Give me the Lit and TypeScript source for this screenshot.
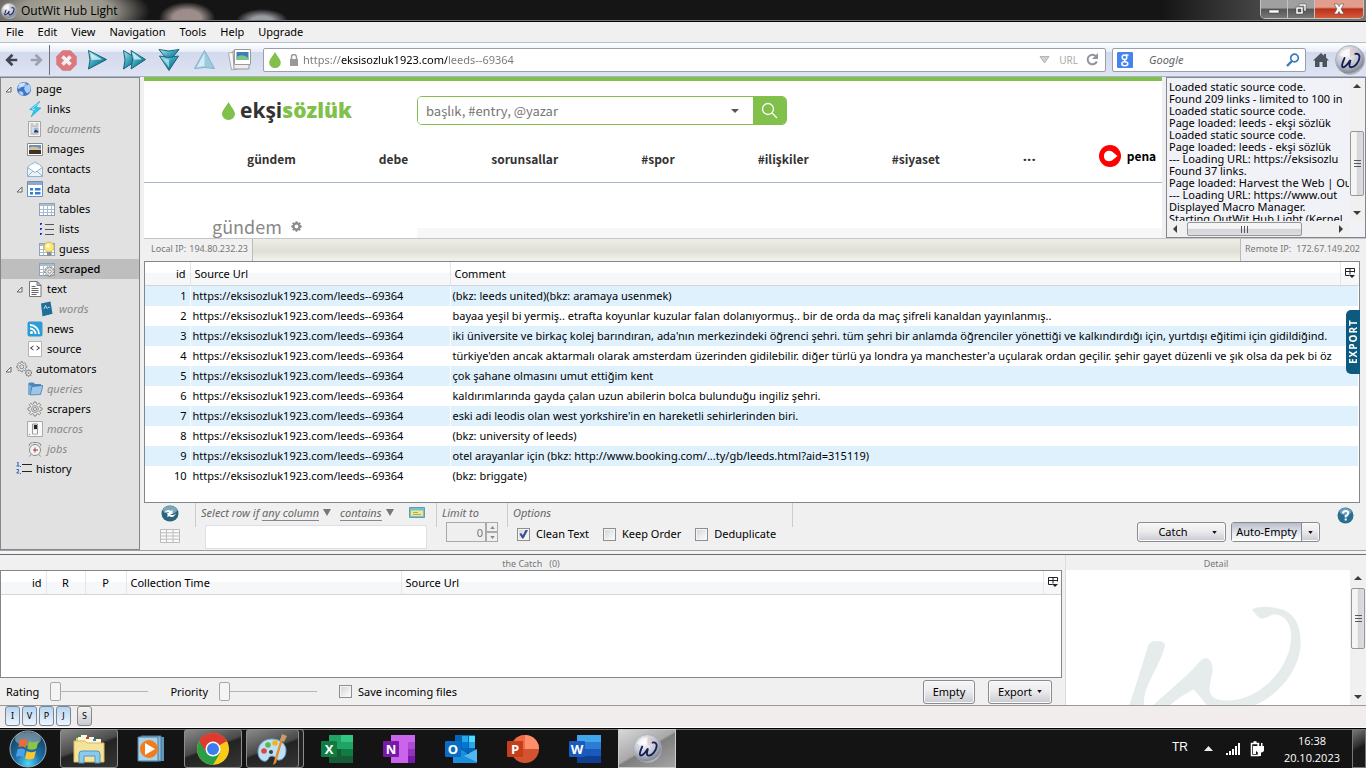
import { LitElement, html, svg, css, nothing, TemplateResult } from "lit";
import { customElement, property } from "lit/decorators.js";
import { classMap } from "lit/directives/class-map.js";

type Node = { name: string; level: number; icon: string; open?: boolean; dim?: boolean; selected?: boolean };

const TREE: Node[] = [
  { name: "page", level: 0, icon: "globe", open: true },
  { name: "links", level: 1, icon: "bolt" },
  { name: "documents", level: 1, icon: "doc", dim: true },
  { name: "images", level: 1, icon: "image" },
  { name: "contacts", level: 1, icon: "mail" },
  { name: "data", level: 1, icon: "data", open: true },
  { name: "tables", level: 2, icon: "grid" },
  { name: "lists", level: 2, icon: "list" },
  { name: "guess", level: 2, icon: "guess" },
  { name: "scraped", level: 2, icon: "scraped", selected: true },
  { name: "text", level: 1, icon: "text", open: true },
  { name: "words", level: 2, icon: "book", dim: true },
  { name: "news", level: 1, icon: "rss" },
  { name: "source", level: 1, icon: "source" },
  { name: "automators", level: 0, icon: "gears", open: true },
  { name: "queries", level: 1, icon: "folder", dim: true },
  { name: "scrapers", level: 1, icon: "gear" },
  { name: "macros", level: 1, icon: "switch", dim: true },
  { name: "jobs", level: 1, icon: "clock", dim: true },
  { name: "history", level: 0, icon: "history" },
];

const URL_TEXT = "https://eksisozluk1923.com/leeds--69364";

const COMMENTS = [
  "(bkz: leeds united)(bkz: aramaya usenmek)",
  "bayaa yeşil bi yermiş.. etrafta koyunlar kuzular falan dolanıyormuş.. bir de orda da maç şifreli kanaldan yayınlanmış..",
  "iki üniversite ve birkaç kolej barındıran, ada'nın merkezindeki öğrenci şehri. tüm şehri bir anlamda öğrenciler yönettiği ve kalkındırdığı için, yurtdışı eğitimi için gidildiğind.",
  "türkiye'den ancak aktarmalı olarak amsterdam üzerinden gidilebilir. diğer türlü ya londra ya manchester'a uçularak ordan geçilir. şehir gayet düzenli ve şık olsa da pek bi öz",
  "çok şahane olmasını umut ettiğim kent",
  "kaldırımlarında gayda çalan uzun abilerin bolca bulunduğu ingiliz şehri.",
  "eski adi leodis olan west yorkshire'in en hareketli sehirlerinden biri.",
  "(bkz: university of leeds)",
  "otel arayanlar için (bkz: http://www.booking.com/...ty/gb/leeds.html?aid=315119)",
  "(bkz: briggate)",
];

const LOG = [
  "Loaded static source code.",
  "Found 209 links - limited to 100 in",
  "Loaded static source code.",
  "Page loaded: leeds - ekşi sözlük",
  "Loaded static source code.",
  "Page loaded: leeds - ekşi sözlük",
  "--- Loading URL: https://eksisozlu",
  "Found 37 links.",
  "Page loaded: Harvest the Web | Ou",
  "--- Loading URL: https://www.out",
  "Displayed Macro Manager.",
  "Starting OutWit Hub Light (Kernel",
];

const gearPath =
  "M7 1h2l.4 1.9 1.2.5L12.300 2.300l1.400 1.400-1.100 1.700.5 1.200L15 7v2l-1.900.4-.5 1.200 1.100 1.700-1.400 1.400-1.700-1.100-1.200.5L9 15H7l-.4-1.900-1.200-.5-1.700 1.100-1.400-1.400 1.100-1.700-.5-1.200L1 9V7l1.900-.4.5-1.200-1.100-1.700 1.400-1.400 1.700 1.100 1.200-.5z";

const tableGrid = svg`<rect x=".5" y="2.500" width="15" height="12" fill="#fff" stroke="#8fa2b6"/><path d="M1 3h14v2H1z" fill="#a9bccf"/><path d="M1 8.500h14M1 11.500h14M4.500 5v9M8.500 5v9M12.500 5v9" stroke="#a9bccf"/>`;

const ICONS: Record<string, TemplateResult> = {
  globe: svg`<circle cx="8" cy="8" r="7" fill="#3f74c4"/><path d="M3 3.500Q6 .8 9.500 1.600L8 4.500 5.500 6 3 8 1.500 7zM10 5l3-2 1.800 4-1.200 4-2.600 1.500L9 10l-1-3zM4 10l3 1 .5 3.500Q4 14 2.500 11.500z" fill="#a8cdf6"/><ellipse cx="7" cy="4" rx="4" ry="2" fill="#fff" opacity=".45"/>`,
  bolt: svg`<path d="M13 0 2.500 8.500l4.500 1L4 16l10-9-5-.800z" fill="#27c4f2" stroke="#1d9fd6" stroke-width=".5"/><path d="M11 2.500 5 8l3.500.8" fill="none" stroke="#9deafd"/>`,
  doc: svg`<path d="M1.500.5h12v15h-12z" fill="#f6f6f6" stroke="#a5a5a5"/><path d="M3.500 3h3M8.500 3h3M3.500 5h8M3.500 7h2M3.500 9h2M3.500 11h2M3.500 13h8" stroke="#999"/><path d="M6.500 6.500h5v5h-5z" fill="#9db9e0"/><path d="m6.500 11.500 2-3 3 2v1z" fill="#233a68"/>`,
  image: svg`<path d="M.5 2.500h15v12H.5z" fill="#fff" stroke="#8a8a8a"/><path d="M2 4h12v9H2z" fill="#6d8fc4"/><path d="M2 8h12v5H2z" fill="#3b3326"/><path d="M2 7q5-3 12 1v1H2z" fill="#d9c08f"/>`,
  mail: svg`<path d="M.5 6 8 .8 15.500 6v9.500H.5z" fill="#eaf5fb" stroke="#93b4c8"/><path d="M3 4h10v5l-5 3-5-3z" fill="#fff"/><path d="m.5 6.500 7.500 5 7.500-5M.5 15.500 6 10M15.500 15.500 10 10" fill="none" stroke="#93b4c8"/>`,
  data: svg`<path d="M.5.500h15v15H.5z" fill="#fff" stroke="#6f8eb5"/><path d="M1 1h14v3H1z" fill="#8ea9cb"/><path d="M3 7h3v2.500H3zM3 11h3v2.500H3zM8 7h5.500v2.500H8zM8 11h5.500v2.500H8z" fill="#2f7de0"/>`,
  grid: tableGrid,
  list: svg`<path d="M6 3.500h9M6 8.500h9M6 13.500h9" stroke="#555"/><path d="M1 2h2v2H1zM1 7h2v2H1zM1 12h2v2H1z" fill="#1a25d0"/><path d="M2 3h1v1H2zM2 8h1v1H2zM2 13h1v1H2z" fill="#3db0e8"/>`,
  guess: svg`${tableGrid}<circle cx="10" cy="6" r="5" fill="#fbe77a" stroke="#d8b23c" stroke-width=".8"/><circle cx="9" cy="5" r="2" fill="#fffbd6"/><path d="M8 11h4v4H8z" fill="#8b9096"/>`,
  scraped: svg`${tableGrid}<g transform="translate(5 5) scale(.7)"><path d=${gearPath} fill="#e2e2e2" stroke="#777"/><circle cx="8" cy="8" r="2.200" fill="#fff" stroke="#777"/></g>`,
  text: svg`<path d="M2.500.5H10L14 4.500v11H2.500z" fill="#fff" stroke="#777"/><path d="M10 .5v4h4z" fill="#ccc" stroke="#777"/><path d="M4.500 5.500h4M4.500 7.500h7M4.500 9.500h7M4.500 11.500h7M4.500 13.500h5" stroke="#666"/>`,
  book: svg`<path d="m2 2.500 9.500-2 2 12.500-10 2.500z" fill="#1f6f99"/><path d="m3.500 15.500 10-2.500.5 1-9.800 2z" fill="#dce8ee"/><path d="m5 8 1.500-3.500L8 7.500M8.500 7.500q1.500-3 2-.5" fill="none" stroke="#cfe6f2" stroke-width=".9"/>`,
  rss: svg`<rect x=".5" y=".5" width="15" height="15" rx="2" fill="#2c9cd8"/><circle cx="4.500" cy="11.500" r="1.500" fill="#fff"/><path d="M3 7.500a5.500 5.500 0 0 1 5.500 5.500M3 4a9 9 0 0 1 9 9" fill="none" stroke="#fff" stroke-width="1.800"/>`,
  source: svg`<path d="M1.500.5h13v15h-13z" fill="#fff" stroke="#b4b4b4"/><path d="m6.500 5-3 2 3 2M9.500 5l3 2-3 2" fill="none" stroke="#333"/>`,
  gears: svg`<g transform="scale(.72)"><path d=${gearPath} fill="#ededed" stroke="#666"/><circle cx="8" cy="8" r="2.800" fill="#e1e1e1" stroke="#666"/></g><g transform="translate(9 8.500) scale(.45)"><path d=${gearPath} fill="#ededed" stroke="#666" stroke-width="1.800"/><circle cx="8" cy="8" r="2" fill="#777"/></g>`,
  folder: svg`<path d="M1 3l1.500-1.500h4L8 3h6v10H1z" fill="#4d86bd"/><path d="M3 14 5 5.500l11-1-2.500 9z" fill="#9cc6ea" stroke="#3d719f" stroke-width=".7"/><path d="M1 3v11h2L4.500 5" fill="#7bb0dd"/>`,
  gear: svg`<path d=${gearPath} fill="#e9e9e9" stroke="#8a8a8a"/><circle cx="8" cy="8" r="3.500" fill="#d6d6d6" stroke="#999"/><circle cx="8" cy="8" r="1.500" fill="#fff" stroke="#8a8a8a"/>`,
  switch: svg`<path d="M.5.500h15v15H.5z" fill="#f7f7f7" stroke="#aaa"/><path d="M5.500 3h5v10h-5z" fill="#ddd" stroke="#999"/><path d="M7 4h3v4H7z" fill="#222"/><path d="M6 9h4v3.500H6z" fill="#fafafa"/><circle cx="2.500" cy="13.500" r=".7" fill="#999"/>`,
  clock: svg`<circle cx="8" cy="9" r="5.500" fill="#f4f4f4" stroke="#8b8b8b"/><path d="M2 5q0-3 3.500-3.500M14 5q0-3-3.500-3.500M6 1.500h4M4 13.500 2.500 15.500M12 13.500l1.500 2" fill="none" stroke="#8b8b8b"/><path d="M8 6.500v5M6 9h5" stroke="#a33b3b"/>`,
  history: svg`<path d="M6 3.500h10M6 10.500h10" stroke="#222"/><path d="M1 2l1-1v4M.5 5h3M.5 8.500h2v1.500L.7 12h2.500" fill="none" stroke="#2a64b4"/><path d="M4 5h1v1H4zM4 12h1v1H4z" fill="#2a64b4"/>`,
};

const icon = (name: string) => html`<svg class="i16" viewBox="0 0 16 16" aria-hidden="true">${ICONS[name]}</svg>`;

const wit = (id: string, cls: string) => html`<svg class=${cls} viewBox="0 0 30 30" aria-hidden="true">
  <defs>
    <radialGradient id=${id} cx=".4" cy=".3" r=".75"><stop offset="0" stop-color="#fff"/><stop offset=".55" stop-color="#bfc2cd"/><stop offset=".85" stop-color="#858a95"/><stop offset="1" stop-color="#e8e8ee"/></radialGradient>
  </defs>
  <circle cx="15" cy="15" r="14.500" fill="url(#${id})" stroke="#a7abb5" stroke-width=".8"/>
  <path d="M4 10Q9 3 17 3.500L9 12z" fill="#fff" opacity=".6"/><path d="M15 3q7 1 9 6l-9 3z" fill="#d9b9c2" opacity=".5"/>
  <path d="M9.500 13C8 17 6 20.500 7.500 22c2.500 1.500 6-4 8-7-1 4-2.200 6.500 0 7.200 4 1 8.500-5 9-9.700.3-3-2-4.300-4.200-3.600" fill="none" stroke="#131f57" stroke-width="1.900" stroke-linecap="round"/>
</svg>`;

const tealDefs = html`<svg class="defs" aria-hidden="true"><defs>
  <linearGradient id="teal" x1="0" y1="0" x2="1" y2="1"><stop offset="0" stop-color="#a8e3ec"/><stop offset=".5" stop-color="#2f9bb3"/><stop offset="1" stop-color="#0e5268"/></linearGradient>
</defs></svg>`;

const drop = (cls: string) => html`<svg class=${cls} viewBox="0 0 13 18" aria-hidden="true"><path d="M6.500 0C8.500 4 13 8.500 13 12a6.500 6 0 0 1-13 0C0 8.500 4.500 4 6.500 0z" fill="#80c04b"/></svg>`;

const OFFICE_ART: Record<string, TemplateResult> = {
  X: svg`<path d="M8 2h12v14H8z" fill="#21a366"/><path d="M20 2h12v7H20z" fill="#33c481"/><path d="M20 9h12v7H20z" fill="#21a366"/><path d="M8 16h12v7H8z" fill="#185c37"/><path d="M20 16h12v7H20z" fill="#107c41"/><path d="M8 23h24v7H8z" fill="#185c37"/>`,
  N: svg`<path d="M8 2h24v28H8z" fill="#ca64ea"/><path d="M25 9h7v7h-7z" fill="#ae4bd5"/><path d="M25 16h7v7h-7z" fill="#9332bf"/><path d="M25 23h7v7h-7z" fill="#7719aa"/>`,
  O: svg`<path d="M10 2h20v18H10z" fill="#0364b8"/><path d="M17 3h6v6h-6z" fill="#28a8ea"/><path d="M24 3h6v6h-6z" fill="#50d9ff"/><path d="M17 9h6v6h-6z" fill="#0078d4"/><path d="M24 9h6v6h-6z" fill="#28a8ea"/><path d="M8 17h9l15 10v3H8z" fill="#1a8fdc"/><path d="M32 16v13L19 23z" fill="#50b8f0"/>`,
  P: svg`<circle cx="18" cy="16" r="14" fill="#d35230"/><path d="M18 2a14 14 0 0 1 14 14H18z" fill="#ff8f6b"/><path d="M18 2v14H4A14 14 0 0 1 18 2z" fill="#ed6c47"/>`,
  W: svg`<path d="M8 2h24v7H8z" fill="#41a5ee"/><path d="M8 9h24v7H8z" fill="#2b7cd3"/><path d="M8 16h24v7H8z" fill="#185abd"/><path d="M8 23h24v7H8z" fill="#103f91"/>`,
};

const office = (letter: string, tile: string) => html`
  <svg class="app" viewBox="0 0 32 32" aria-hidden="true">
    ${OFFICE_ART[letter]}
    <rect y="8" width="16" height="16" rx="1" fill=${tile}/>
    <text x="8" y="20.500" text-anchor="middle" font-family="Open Sans, sans-serif" font-weight="700" font-size="13" fill="#fff">${letter}</text>
  </svg>`;

@customElement("scroll-bar")
export class ScrollBar extends LitElement {
  @property({ type: Boolean, reflect: true }) horizontal = false;

  static styles = css`
    :host { display: flex; flex-direction: column; align-items: stretch; width: 16px; background: #f0f0f0; box-sizing: border-box; }
    :host([horizontal]) { flex-direction: row; width: auto; height: 16px; }
    svg { display: block; width: 16px; height: 16px; flex: none; }
    .before { flex: var(--before, 1); }
    .after { flex: var(--after, 1); }
    .thumb { flex: var(--thumb, 1); display: grid; place-content: center; gap: 2px; border: 1px solid #979797; border-radius: 2px; background: linear-gradient(90deg, #f5f5f5 45%, #d4d4d8 50%, #dedee2); margin: 0 1px; }
    :host([horizontal]) .thumb { background: linear-gradient(#f5f5f5 45%, #d4d4d8 50%, #dedee2); margin: 1px 0; grid-auto-flow: column; }
    .grip { width: 7px; height: 1px; background: #55585f; }
    :host([horizontal]) .grip { width: 1px; height: 7px; }
  `;

  render() {
    const h = this.horizontal;
    return html`
      <svg viewBox="0 0 16 16"><path d=${h ? "M10 4v8L6 8z" : "M4 10h8L8 6z"} fill="#3c3c3c"/></svg>
      <div class="before"></div>
      <div class="thumb"><div class="grip"></div><div class="grip"></div><div class="grip"></div></div>
      <div class="after"></div>
      <svg viewBox="0 0 16 16"><path d=${h ? "M6 4v8l4-4z" : "M4 6h8l-4 4z"} fill="#3c3c3c"/></svg>
    `;
  }
}

@customElement("app-root")
export class AppRoot extends LitElement {
  static styles = css`
    :host { display: flex; flex-direction: column; height: 100vh; overflow: hidden; font: 11px/16px "Noto Sans", "Open Sans", sans-serif; color: #000; background: #f0f0f0; }
    * { box-sizing: border-box; }
    button, input, select { font: inherit; color: inherit; margin: 0; }
    button { padding: 0; border: 0; background: none; }
    svg { display: block; flex: none; }
    .defs { position: absolute; width: 0; height: 0; }
    .i16 { width: 16px; height: 16px; }

    .title { display: flex; align-items: flex-start; height: 22px; flex: none; overflow: hidden; border-bottom: 1px solid #000; box-shadow: inset 0 -1px #77797c;
      background: radial-gradient(ellipse 84px 30px at 66px 11px, #aeaba0, #98958b 55%, #98958b00 100%), radial-gradient(ellipse 28px 16px at 187px 18px, #9c8d8a 50%, #9c8d8a00 100%), radial-gradient(ellipse 26px 12px at 262px 21px, #9a9da3 40%, #9a9da300 100%), linear-gradient(90deg, #55534e, #151515 10%, #151515 85%, #444 92%, #777); }
    .title .brand { display: flex; align-items: center; gap: 4px; height: 21px; padding-left: 1px; flex: 1; font: 12px/16px "Open Sans", sans-serif; }
    .tiny { width: 16px; height: 16px; }
    .wctl { display: flex; height: 19px; margin-right: 2px; border: 1px solid #c3c3c3; border-top: 0; border-radius: 0 0 5px 5px; overflow: hidden; }
    .wctl button { width: 27px; height: 18px; display: grid; place-items: center; background: linear-gradient(#a0a0a0 45%, #555 50%, #777); border-right: 1px solid #c3c3c3; }
    .wctl .x { width: 48px; border: 0; background: linear-gradient(#e39d8c 40%, #b8301a 50%, #d9593a); }
    .wctl svg { width: 14px; height: 12px; }

    .menu { display: flex; align-items: center; gap: 14px; height: 21px; padding-left: 6px; border-bottom: 1px solid #b1bfd4; background: #f0f0f0; flex: none; }

    .tools { display: flex; align-items: center; height: 34px; flex: none; border-bottom: 1px solid #a9b1c4; background: linear-gradient(#fff, #e9edf7 26%, #d2d9ec 28%, #dfe4f3); }
    .tools .nav { width: 24px; height: 30px; display: grid; place-items: center; }
    .tools .act { width: 35px; height: 30px; display: grid; place-items: center; }
    .tools .stop { width: 31px; }
    .nav svg { width: 14px; height: 14px; }
    .act svg { width: 28px; height: 26px; }
    .sep { width: 1px; height: 30px; background: #6d717c; margin: 0 1px; }
    .field { display: flex; align-items: center; height: 24px; border: 1px solid #9ba0a8; border-radius: 2px; background: #fff; color: #999; }
    .field.url { flex: 1; margin: 0 6px; padding: 0 6px 0 5px; }
    .field.find { width: 194px; padding: 0 5px 0 4px; }
    .field input { flex: 1; min-width: 0; border: 0; outline: 0; background: none; }
    .url input { margin-left: 3px; color: transparent; background: linear-gradient(90deg, #777 40px, #000 40px 146px, #777 146px); -webkit-background-clip: text; background-clip: text; }
    .find input { font-style: italic; padding-left: 16px; }
    .find input::placeholder { color: #666; }
    .dropi { width: 12px; height: 16px; margin-right: 9px; }
    .lock { width: 8px; height: 12px; }
    .field small { font-size: 10px; color: #aaa; margin: 0 8px 0 9px; }
    .home { width: 16px; height: 16px; margin: 0 6px 0 7px; }
    .orb { width: 30px; height: 30px; margin-right: 1px; }

    .main { display: flex; flex: 1; min-height: 0; }
    .tree { width: 140px; flex: none; border: 1px solid #82868f; background: #e1e1e1; padding-top: 1px; }
    .tree ul { list-style: none; margin: 0; padding: 0; }
    .tree li { display: flex; align-items: center; height: 20px; padding-left: 4px; }
    .tree .l1 { padding-left: 15px; }
    .tree .l2 { padding-left: 27px; }
    .tree .tw { width: 7px; height: 7px; margin-right: 4px; }
    .tree span { padding-left: 4px; }
    .tree .dim { color: #888; font-style: italic; }
    .tree .sel { background: #bebebe; }
    .tree .sel span { font-weight: 500; }

    .work { flex: 1; min-width: 0; display: flex; flex-direction: column; margin-left: 4px; }
    .top { display: flex; height: 161px; flex: none; }
    .site { flex: 1; min-width: 0; overflow: hidden; background: #fff; border-top: 4px solid #80c04b; font-family: "Noto Sans CJK SC", "Open Sans", sans-serif; color: #333; }
    .shead { display: flex; align-items: center; padding: 15px 0 0 78px; }
    .slogo { display: flex; align-items: center; gap: 5px; width: 195px; font-family: "Open Sans", sans-serif; font-size: 21px; font-weight: 700; line-height: 29px; }
    .slogo b { color: #80c04b; margin-left: -5px; }
    .dropl { width: 13px; height: 18px; }
    .sfind { display: flex; width: 370px; height: 29px; border: 1px solid #80c04b; border-radius: 5px; overflow: hidden; }
    .sfind input { flex: 1; min-width: 0; border: 0; outline: 0; padding: 0 8px; font-size: 13px; }
    .sfind input::placeholder { color: #757575; }
    .sfind .dd { width: 36px; display: grid; place-items: center; }
    .sfind .go { width: 33px; display: grid; place-items: center; background: #80c04b; }
    .snav { display: flex; align-items: center; gap: 83px; height: 58px; padding: 10px 0 0 103px; border-bottom: 1px solid #a9b7c6; font-size: 12px; font-weight: 700; line-height: 20px; white-space: nowrap; }
    .snav a { color: inherit; text-decoration: none; }
    .snav .dots { font: 700 15px/20px "Open Sans", sans-serif; }
    .snav .pena { display: flex; align-items: center; gap: 6px; margin: 0 0 6px -20px; color: #000; }
    .pena svg { width: 22px; height: 22px; }
    .sbody { display: flex; align-items: flex-start; padding: 32px 0 0 68px; }
    .sbody h2 { display: flex; align-items: center; gap: 9px; margin: 0; width: 205px; font-size: 18px; line-height: 22px; font-weight: 400; color: #888; }
    .sbody h2 svg { width: 11px; height: 11px; }
    .sbody .band { flex: 1; height: 20px; margin-top: 13px; background: #f7f7f7; }

    .log { width: 200px; margin-left: 4px; border: 1px solid #82868f; display: grid; grid-template: minmax(0, 1fr) 16px / minmax(0, 1fr) 16px; background: #f0f2f8; }
    .log .lines { overflow: hidden; padding: 3px 0 0 2px; line-height: 12px; white-space: nowrap; }
    .vlog { --before: 38; --thumb: 64; --after: 9; }
    .hlog { --before: 4; --thumb: 115; --after: 32; }

    .ips { display: flex; height: 23px; flex: none; border-top: 1px solid #c6c6c6; font-size: 9px; line-height: 20px; color: #777; }
    .ips div { display: flex; justify-content: space-between; width: 109px; padding: 0 4px 0 7px; border-right: 1px solid #bbb; }
    .ips div:last-child { width: 125px; border: 0; padding: 0 6px 0 4px; }
    .ips i { flex: 1; background: linear-gradient(#eeeee8, #dfdfd6 55%, #f4f4ec); border-right: 1px solid #bbb; }

    .gridwrap { flex: 1; min-height: 0; margin-right: 6px; border: 1px solid #82868f; background: #fff; overflow: hidden; }
    table { width: 100%; border-collapse: collapse; table-layout: fixed; }
    th { height: 23px; padding: 1px 4px 0; font-weight: 400; text-align: left; background: linear-gradient(#fff 45%, #f6f7f9 50%); border-bottom: 1px solid #d5d5d5; border-right: 1px solid #e6e6ea; }
    th:last-child { border-right: 0; padding: 0 0 0 3px; }
    th svg { width: 12px; height: 12px; }
    td { height: 20px; padding: 0 3px 0 2px; overflow: hidden; white-space: nowrap; border-right: 1px solid #fff; line-height: 20px; }
    .gap td { height: 1px; }
    .num { text-align: right; width: 45px; }
    .src { width: 260px; }
    .pick { width: 18px; }
    tr.odd td { background: #dff1fd; }

    .filter { display: flex; height: 47px; flex: none; color: #666; }
    .filter .cell { border-right: 1px solid #ccc; height: 24px; }
    .filter i, .filter select { font-style: italic; }
    .c0 { width: 52px; display: flex; flex-direction: column; align-items: center; gap: 7px; padding-top: 2px; }
    .c0 .big { width: 18px; height: 17px; }
    .c0 .tbl { width: 20px; height: 14px; }
    .c1 { width: 241px; padding: 1px 0 0 5px; }
    .row { display: flex; align-items: center; height: 17px; }
    .row select { appearance: none; border: 0; padding: 0; background: none; border-bottom: 1px solid #888; outline: 0; height: 16px; }
    .row .ar { width: 8px; height: 7px; margin: 0 9px 0 4px; }
    .row .card { width: 16px; height: 11px; margin-left: 6px; }
    .c1 .q { display: block; width: 222px; height: 24px; margin: 4px 0 0 4px; border: 1px solid #dcdfe6; background: #fff; }
    .c2 { width: 71px; padding: 1px 0 0 5px; }
    .spin { display: flex; align-items: flex-end; padding: 1px 0 0 4px; }
    .spin input { width: 40px; height: 20px; border: 1px solid #aaa; background: #efefef; text-align: right; padding: 0 2px 0 0; appearance: textfield; color: #777; }
    .spin input::-webkit-inner-spin-button { display: none; }
    .spin div { display: flex; flex-direction: column; width: 12px; height: 20px; }
    .spin button { flex: 1; border: 1px solid #aaa; display: grid; place-items: center; }
    .spin svg { width: 5px; height: 3px; }
    .c3 { width: 285px; padding: 1px 0 0 5px; }
    .checks { display: flex; gap: 14px; padding: 5px 0 0 4px; color: #000; }
    label.chk { display: flex; align-items: center; gap: 6px; white-space: nowrap; color: #000; }
    label.chk input { appearance: none; width: 13px; height: 13px; flex: none; border: 1px solid #8e8f8f; background: linear-gradient(135deg, #cfd3d9, #fff); box-shadow: inset 0 0 0 1px #f4f4f4; display: grid; }
    label.chk input:checked::before { content: ""; margin: 1px; background: #3a4f91; clip-path: polygon(5% 50%, 25% 40%, 42% 65%, 75% 0, 100% 5%, 50% 100%, 35% 100%); }
    .end { margin-left: auto; display: flex; padding: 0 12px 0 0; }
    .btn { display: flex; align-items: center; justify-content: center; gap: 8px; height: 20px; border: 1px solid #8a8b90; border-radius: 3px; background: linear-gradient(#f6f6f6, #ececee 45%, #c9cad2); box-shadow: inset 0 0 0 1px #fafafa; color: #000; }
    .btn svg { width: 5px; height: 3px; }
    .end .btn { margin-top: 19px; width: 89px; }
    .end .catch { gap: 24px; padding-left: 12px; margin-right: 5px; }
    .end .auto { padding: 0; gap: 0; }
    .auto span { flex: 1; height: 18px; line-height: 18px; border-right: 1px solid #8a8b90; background: linear-gradient(#b9bccb, #e8eaf0 60%, #fff); }
    .auto svg { margin: 0 6px; }
    .help { width: 17px; height: 17px; margin: 4px 0 0 17px; }

    .split { height: 5px; flex: none; border-top: 1px solid #a0a0a0; border-bottom: 1px solid #6c6c70; background: #f4f4f4; }
    .lower { display: flex; flex: none; height: 151px; border-bottom: 1px solid #999; }
    .catchp { flex: 1; min-width: 0; display: flex; flex-direction: column; }
    .cap { height: 15px; line-height: 18px; font-size: 9px; text-align: center; color: #777; flex: none; white-space: pre; }
    .catchp .gridwrap { margin: 0; }
    .c-num { width: 45px; }
    .c-r { width: 39px; text-align: center; }
    .c-p { width: 41px; text-align: center; }
    .c-t { width: 275px; }
    .bottom { display: flex; align-items: center; height: 27px; padding: 0 10px 0 6px; flex: none; }
    .bottom .rng { display: flex; align-items: center; gap: 11px; margin-right: 22px; }
    .bottom .rng input { appearance: none; width: 98px; height: 20px; background: linear-gradient(#b5b5b5, #b5b5b5) 0 9px / 100% 1px no-repeat; }
    .rng input::-webkit-slider-thumb { appearance: none; width: 11px; height: 19px; border: 1px solid #a4a6a8; border-radius: 2px; background: #f4f4f4; }
    .bottom .btn { height: 24px; width: 52px; margin-left: auto; }
    .bottom .exp { width: 64px; margin-left: 13px; gap: 5px; }
    .detail { width: 301px; margin-left: 3px; border-left: 1px solid #ddd; display: flex; flex-direction: column; }
    .dbody { flex: 1; display: flex; min-height: 0; background: #fff; }
    .dbody .art { flex: 1; min-width: 0; }
    .vdet { --before: 2; --thumb: 60; --after: 41; }

    .status { display: flex; gap: 2px; height: 22px; flex: none; padding: 0 0 2px 5px; background: #f1edec; border-bottom: 1px solid #fff; }
    .status button { width: 15px; height: 20px; border: 1px solid #74889c; border-radius: 3px; background: linear-gradient(#b7d4ef, #eef5fc); font-size: 9px; line-height: 16px; }
    .status .s { margin-left: 4px; border-color: #888; background: linear-gradient(#f4f4f4, #c9cad2); }

    .task { display: flex; align-items: stretch; gap: 4px; height: 40px; flex: none; border-top: 1px solid #000; box-shadow: inset 0 1px #6e7072; background: #141414; color: #fff; }
    .start { width: 56px; display: grid; place-items: center; }
    .start svg { width: 38px; height: 38px; }
    .task .it { width: 58px; display: grid; place-items: center; }
    .task .on { border: 1px solid #8d8d8d; border-radius: 3px; background: linear-gradient(160deg, #8a8a8a, #4a4a4a 45%, #232323 50%, #353535); }
    .task .cur { border: 1px solid #ccc; background: linear-gradient(150deg, #d8d8d8, #a9a9a9 48%, #7e7e7e 52%, #a5a5a5); }
    .task .double { box-shadow: inset -4px 0 #222, inset -5px 0 #8d8d8d; padding-right: 5px; }
    .app { width: 32px; height: 32px; }
    .worb { width: 29px; height: 29px; }
    .tray { margin-left: auto; display: flex; align-items: center; }
    .tray .lang { font: 12px/16px "Liberation Sans", sans-serif; margin-right: 16px; padding-bottom: 4px; }
    .tray .up { width: 9px; height: 5px; margin-right: 13px; }
    .tray .sig { width: 15px; height: 12px; margin-right: 9px; }
    .tray .bat { width: 14px; height: 16px; margin-right: 20px; }
    .clock { font: 11px/17px "Open Sans", sans-serif; text-align: center; margin-right: 12px; white-space: nowrap; }
    .desk { align-self: stretch; width: 14px; border: 1px solid #777; background: linear-gradient(150deg, #777, #333 40%, #1a1a1a 50%); }

    .export { position: absolute; right: 6px; top: 310px; width: 14px; height: 64px; border-radius: 0 5px 5px 0; background: #0d5a80; color: #fff; font: 700 10px/13px "Open Sans", sans-serif; letter-spacing: 1px; writing-mode: vertical-rl; transform: rotate(180deg); text-align: center; }
  `;

  private picker() {
    return html`<svg viewBox="0 0 12 12" aria-label="Columns"><path d="M1.500 1.500h9v4M1.500 1.500v7h4M1.500 4.500h9M6 1.500v6" fill="none" stroke="#222"/><path d="M5 8h6l-3 3z" fill="#222"/></svg>`;
  }

  private arrow(fill = "#111") {
    return html`<svg viewBox="0 0 6 4" aria-hidden="true"><path d="M0 0h6L3 4z" fill=${fill}/></svg>`;
  }

  private titleBar() {
    return html`<header class="title">
      <div class="brand">${wit("w1", "tiny")}<span>OutWit Hub Light</span></div>
      <div class="wctl">
        <button aria-label="Minimize"><svg viewBox="0 0 14 12"><path d="M2 7h10v3H2z" fill="#fff" stroke="#444" stroke-width=".6"/></svg></button>
        <button aria-label="Restore"><svg viewBox="0 0 14 12"><path d="M5 1h7v7h-2V3H5zM2 4h7v7H2zm2 2v3h3V6z" fill="#fff" fill-rule="evenodd" stroke="#444" stroke-width=".5"/></svg></button>
        <button class="x" aria-label="Close"><svg viewBox="0 0 14 12"><path d="M2 1h3.500L7 3.500 8.500 1H12L9 6l3 5H8.500L7 8.500 5.500 11H2l3-5z" fill="#fff" stroke="#555" stroke-width=".6"/></svg></button>
      </div>
    </header>`;
  }

  private toolbar() {
    const t = "url(#teal)";
    const teal = (d: string) => svg`<path d=${d} fill=${t} stroke="#15657c"/>`;
    const tdef = (id: string) => svg`<defs><linearGradient id=${id} x1="0" y1="0" x2="1" y2="1"><stop offset="0" stop-color="#b5e8f0"/><stop offset=".5" stop-color="#2f9bb3"/><stop offset="1" stop-color="#0e5268"/></linearGradient></defs>`;
    return html`<div class="tools">
      <button class="nav" aria-label="Back"><svg viewBox="0 0 16 16"><path d="M8.500 2 2.500 8l6 6M3 8h11" fill="none" stroke="#3f4550" stroke-width="3"/></svg></button>
      <button class="nav" aria-label="Forward"><svg viewBox="0 0 16 16"><path d="m7.500 2 6 6-6 6M13 8H2" fill="none" stroke="#9ba1ad" stroke-width="3"/></svg></button>
      <span class="sep"></span>
      <button class="act stop" aria-label="Stop"><svg viewBox="0 0 28 26"><path d="M9.500 3.500h8l6 6v8l-6 6h-8l-6-6v-8z" fill="#e0656b" opacity=".85" stroke="#c78b92"/><path d="m9.500 9.500 8 8M17.500 9.500l-8 8" stroke="#f7f2f2" stroke-width="3.600"/></svg></button>
      <button class="act" aria-label="Next"><svg viewBox="0 0 28 26">${tdef("t1")}<path d="M2.500 3.500 20.500 12.500 2.500 22 4 13z" fill="url(#t1)" stroke="#15657c" stroke-linejoin="round"/><path d="m4.500 6 12 6.500-11 .5z" fill="#e4f8fb" opacity=".75"/></svg></button>
      <button class="act" aria-label="Browse"><svg viewBox="0 0 28 26">${tdef("t2")}<path d="M2.500 3.500 17 12.500 2.500 22 4 13z" fill="url(#t2)" stroke="#15657c" stroke-linejoin="round"/><path d="M10 3.500 24.500 12.500 10 22l1.500-9z" fill="url(#t2)" stroke="#15657c" stroke-linejoin="round"/><path d="m12 6 9 6.500h-8z" fill="#e4f8fb" opacity=".75"/></svg></button>
      <button class="act" aria-label="Dig"><svg viewBox="0 0 28 26">${tdef("t3")}<path d="M3 2.500q10 3 20 0L13 15z" fill="url(#t3)" stroke="#15657c" stroke-linejoin="round"/><path d="M3.500 9q9.500 3 19 0L13 23.500z" fill="url(#t3)" stroke="#15657c" stroke-linejoin="round"/><path d="m7 11.500 6 1v8z" fill="#c9f0f6" opacity=".65"/></svg></button>
      <button class="act" aria-label="Up"><svg viewBox="0 0 28 26"><path d="m13.500 3.500 10 18q-10-2-20 0z" fill="#9ccbe0" stroke="#83b1c9" stroke-linejoin="round"/><path d="M13.500 6v13l-8 1.500z" fill="#d4eaf4"/></svg></button>
      <button class="act" aria-label="Slideshow"><svg viewBox="0 0 28 26"><path d="m2.500 6 6-1 3 17-6 1z" fill="#f7f7f7" stroke="#aaa"/><path d="M7 4h16v18H8z" fill="#eee" stroke="#999"/><path d="M8.500 2.500h16v15h-16z" fill="#fff" stroke="#9b9b9b"/><path d="M10.500 5h12v8h-12z" fill="#3c7fb8"/><path d="M10.500 10q6-4 12 1v2h-12z" fill="#7cc38a"/></svg></button>
      <div class="field url">
        ${drop("dropi")}
        <svg class="lock" viewBox="0 0 8 12"><path d="M0 5h8v7H0z" fill="#999"/><path d="M1.500 5V3a2.500 2.500 0 0 1 5 0v2" fill="none" stroke="#999" stroke-width="1.500"/></svg>
        <input aria-label="Address" .value=${URL_TEXT} />
        <svg width="11" height="8" viewBox="0 0 11 8"><path d="M1 .5h9L5.500 7z" fill="#d0d0d0" stroke="#b5b5b5"/></svg>
        <small>URL</small>
        <button aria-label="Reload"><svg width="13" height="13" viewBox="0 0 13 13"><path d="M10.800 8.500A4.800 4.800 0 1 1 9.800 3" fill="none" stroke="#8d949e" stroke-width="2"/><path d="M12 0v6H6z" fill="#8d949e"/></svg></button>
      </div>
      <div class="field find">
        <svg width="16" height="16" viewBox="0 0 16 16"><rect width="16" height="16" rx="1" fill="#4584ee"/><g fill="none" stroke="#fff" stroke-width="1.500"><circle cx="7.500" cy="5.200" r="2.300"/><path d="M9 3h2.500M8.500 7.500q-2 1.500 0 2.200"/><ellipse cx="7.800" cy="11.800" rx="3" ry="2"/></g></svg>
        <input aria-label="Web search" placeholder="Google" />
        <button aria-label="Search"><svg width="14" height="14" viewBox="0 0 14 14"><circle cx="8.500" cy="5" r="3.800" fill="#fff" stroke="#3d7ab8" stroke-width="1.700"/><path d="m6 8-5 5" stroke="#3d7ab8" stroke-width="2.400"/></svg></button>
      </div>
      <button class="home" aria-label="Home"><svg class="i16" viewBox="0 0 16 16"><path d="M8 1 0 8.500h2V15h4.500v-5h3v5H14V8.500h2L13 5.500V2h-2v1.800z" fill="#4b535d"/></svg></button>
      ${wit("w2", "orb")}
    </div>`;
  }

  private tree() {
    return html`<nav class="tree"><ul>
      ${TREE.map((n) => html`<li class=${classMap({ ["l" + n.level]: true, dim: !!n.dim, sel: !!n.selected })}>
        <svg class="tw" viewBox="0 0 7 7">${n.open ? svg`<path d="M6 1v5H1z" fill="#f5f5f5" stroke="#666"/>` : nothing}</svg>
        ${icon(n.icon)}<span>${n.name}</span></li>`)}
    </ul></nav>`;
  }

  private site() {
    return html`<section class="site">
      <div class="shead">
        <div class="slogo">${drop("dropl")}<span>ekşi</span><b>sözlük</b></div>
        <div class="sfind">
          <input aria-label="Search site" placeholder="başlık, #entry, @yazar" />
          <button class="dd" aria-label="More"><svg width="8" height="4" viewBox="0 0 8 4"><path d="M0 0h8L4 4z" fill="#555"/></svg></button>
          <button class="go" aria-label="Go"><svg width="17" height="17" viewBox="0 0 17 17"><circle cx="7" cy="7" r="5.500" fill="none" stroke="#fff" stroke-width="1.300"/><path d="m11 11 5 5" stroke="#fff" stroke-width="1.300"/></svg></button>
        </div>
      </div>
      <nav class="snav">
        ${["gündem", "debe", "sorunsallar", "#spor", "#ilişkiler", "#siyaset"].map((t) => html`<a href="#">${t}</a>`)}
        <a class="dots" href="#">···</a>
        <a class="pena" href="#"><svg viewBox="0 0 22 22"><circle cx="11" cy="11" r="11" fill="#f00"/><path d="M5 11c0-5 5-6 8-4.500L18.500 11 13 15.500C9 17 5 16 5 11z" fill="#fff"/></svg>pena</a>
      </nav>
      <div class="sbody"><h2>gündem <svg viewBox="0 0 16 16"><path d=${gearPath} fill="#888" stroke="#888"/><circle cx="8" cy="8" r="2.800" fill="#fff"/></svg></h2><div class="band"></div></div>
    </section>`;
  }

  private results() {
    return html`<div class="gridwrap"><table>
      <thead><tr><th class="num">id</th><th class="src">Source Url</th><th>Comment</th><th class="pick">${this.picker()}</th></tr></thead>
      <tbody>
        <tr class="gap"><td colspan="4"></td></tr>
        ${COMMENTS.map((c, i) => html`<tr class=${i % 2 ? "" : "odd"}><td class="num">${i + 1}</td><td>${URL_TEXT}</td><td colspan="2">${c}</td></tr>`)}
      </tbody></table></div>`;
  }

  private filter() {
    return html`<div class="filter">
      <div class="cell c0">
        <svg class="big" viewBox="0 0 18 17"><ellipse cx="9" cy="8.500" rx="8.500" ry="8" fill="#2c6480"/><ellipse cx="9" cy="5" rx="7" ry="4" fill="#8fb9cb" opacity=".8"/><path d="M3 8q3-5 7-2l1.500-1.500V9H7l1.500-1.500Q6 6 3 8zM15 8.500q-3 5.500-7 2.500l-1.500 1.500V8H11L9.500 9.500q2.500 1.500 5.500-1z" fill="#fff"/></svg>
        <svg class="tbl" viewBox="0 0 20 14"><path d="M.5.500h19v13H.5zM.5 3.800h19M.5 7h19M.5 10.200h19M6.500.500v13M13 .5v13" fill="#fafafa" stroke="#bcbcbc"/></svg>
      </div>
      <div class="cell c1">
        <div class="row"><i>Select row if</i>&nbsp;<select aria-label="Column"><option>any column</option></select><svg class="ar" viewBox="0 0 8 7"><path d="M0 0h8L4 7z" fill="#777"/></svg>
          <select aria-label="Condition"><option>contains</option></select><svg class="ar" viewBox="0 0 8 7"><path d="M0 0h8L4 7z" fill="#777"/></svg>
          <svg class="card" viewBox="0 0 16 11"><path d="M.5.500h15v10H.5z" fill="#6cc6d4" stroke="#6f98a0"/><path d="M2 3.500h12v5.500H2z" fill="#f4e58e"/><path d="M4 5.500h5M4 7.500h8" stroke="#9a9a55" stroke-width=".8"/></svg></div>
        <input class="q" aria-label="Filter text" />
      </div>
      <div class="cell c2">
        <div class="row"><i>Limit to</i></div>
        <div class="spin"><input type="number" aria-label="Limit" value="0" /><div>
          <button aria-label="More"><svg viewBox="0 0 6 4"><path d="M0 4h6L3 0z" fill="#888"/></svg></button>
          <button aria-label="Less">${this.arrow("#888")}</button></div></div>
      </div>
      <div class="cell c3">
        <div class="row"><i>Options</i></div>
        <div class="checks">
          <label class="chk"><input type="checkbox" checked />Clean Text</label>
          <label class="chk"><input type="checkbox" />Keep Order</label>
          <label class="chk"><input type="checkbox" />Deduplicate</label>
        </div>
      </div>
      <div class="end">
        <button class="btn catch">Catch ${this.arrow()}</button>
        <button class="btn auto"><span>Auto-Empty</span>${this.arrow()}</button>
        <svg class="help" viewBox="0 0 17 17"><circle cx="8.500" cy="8.500" r="8" fill="#2a6f93"/><ellipse cx="8.500" cy="4.500" rx="6" ry="3.500" fill="#83b6cc" opacity=".7"/><path d="M6 6.500Q6 4 8.700 4t2.500 2.300Q11 8 8.700 9v1.500" fill="none" stroke="#fff" stroke-width="2"/><path d="M7.700 11.500h2v2h-2z" fill="#fff"/></svg>
      </div>
    </div>`;
  }

  private lower() {
    return html`<div class="lower">
      <section class="catchp">
        <div class="cap">the Catch   (0)</div>
        <div class="gridwrap"><table><thead><tr><th class="num c-num">id</th><th class="c-r">R</th><th class="c-p">P</th><th class="c-t">Collection Time</th><th>Source Url</th><th class="pick">${this.picker()}</th></tr></thead></table></div>
        <div class="bottom">
          <label class="rng">Rating<input type="range" value="0" /></label>
          <label class="rng">Priority<input type="range" value="0" /></label>
          <label class="chk"><input type="checkbox" />Save incoming files</label>
          <button class="btn">Empty</button>
          <button class="btn exp">Export ${this.arrow()}</button>
        </div>
      </section>
      <section class="detail">
        <div class="cap">Detail</div>
        <div class="dbody">
          <svg class="art" viewBox="78 210 852 404" preserveAspectRatio="xMidYMid slice"><g fill="#e6eceb"><path d="M268 616C292 545 310 485 324 440q5-17 22-17h14q19 2 14 18C358 500 322 540 313 592l-2 24z"/><path d="M338 616C385 575 430 535 458 508c16-16 24-34 40-34 16 1 22 24 19 42-4 24-13 52-4 67 14 22 58 20 90 12 90-25 152-115 150-190-2-38-20-60-48-62-16 0-22 12-42 12-12-3-20-20-28-27 20-13 76-10 106 7 32 18 41 58 40 98-3 80-70 155-141 183H502c-12-12-26-34-41-49-26 14-50 30-73 49z"/></g></svg>
          <scroll-bar class="vdet"></scroll-bar>
        </div>
      </section>
    </div>`;
  }

  private taskbar() {
    return html`<footer class="task">
      <button class="start" aria-label="Start"><svg viewBox="0 0 38 38"><defs><radialGradient id="orb" cx=".5" cy=".9" r=".9"><stop offset="0" stop-color="#4fd8fa"/><stop offset=".4" stop-color="#1c6fa8"/><stop offset="1" stop-color="#16384f"/></radialGradient></defs><circle cx="19" cy="19" r="18" fill="url(#orb)" stroke="#9fb6c4"/><ellipse cx="19" cy="9" rx="13" ry="7" fill="#fff" opacity=".35"/><path d="M11 10q4-2 7.500.5l-1.800 7.500q-3.500-2.500-7.500-.5z" fill="#ee6a32"/><path d="M20 11q4 2.500 9.500 0l-2 7.500q-5 2.500-9.200 0z" fill="#8cc63e"/><path d="M8.500 19.500q4-2 7.700.5l-1.800 7.500q-3.500-2.500-7.500-.5z" fill="#4aa3e8"/><path d="M17.800 21q4 2.500 9.200 0l-2 7.500q-5 2-9 0z" fill="#fcc72c"/></svg></button>
      <button class="it on" aria-label="Explorer"><svg class="app" viewBox="0 0 32 32"><path d="M3 5h9l2 3h14v20H3z" fill="#e9cd6b"/><path d="M5 2h9v8H5z" fill="#fdf7dc"/><path d="M5 2h3v2H5z" fill="#1e9c2f"/><path d="M13 4h8v8h-8z" fill="#fdf7dc"/><path d="M13 4h3v2h-3z" fill="#d8402a"/><path d="M20 6h8v8h-8z" fill="#fdf7dc"/><path d="M20 6h3v2h-3z" fill="#2b83d8"/><path d="M1 8h11l2 2h17v19H1z" fill="#f6e39a" stroke="#d7b95a"/><path d="M6 30v-9q0-3 3-3h15q3 0 3 3v9h-5v-7H11v7z" fill="#8ccaec" stroke="#4c97c4"/></svg></button>
      <button class="it" aria-label="Media Player"><svg class="app" viewBox="0 0 32 32"><path d="M8 4h21v24H8z" fill="#5b96bd"/><path d="M6 3h20v25H6z" fill="#8dbddb" stroke="#4c7c9b"/><path d="M3 4h20v24H3z" fill="#a9d1e8" stroke="#4c7c9b"/><circle cx="14" cy="16" r="9" fill="#f07c1c"/><path d="m10 10 10 6-10 6z" fill="#fff"/></svg></button>
      <button class="it on" aria-label="Chrome"><svg class="app" viewBox="0 0 32 32"><circle cx="16" cy="16" r="16" fill="#fbc918"/><path d="M16 16 2.150 8A16 16 0 0 1 29.850 8z" fill="#e0392e"/><path d="M2.150 8A16 16 0 0 0 16 32l7-12-7-4z" fill="#2aa046"/><path d="M16 8.500h13.900A16 16 0 0 0 2.150 8L9.500 20z" fill="#e0392e"/><circle cx="16" cy="16" r="7.500" fill="#fff"/><circle cx="16" cy="16" r="6" fill="#3b7ded"/></svg></button>
      <button class="it on double" aria-label="Paint"><svg class="app" viewBox="0 0 32 32"><path d="M15 6C6 6 1 12 1 19s5 10 8 9 2-5 6-5 4 5 8 4 6-5 6-10S24 6 15 6z" fill="#bfe0f4" stroke="#6da3c6"/><circle cx="7" cy="18" r="2.800" fill="#dc4a3d"/><circle cx="11" cy="12" r="2.800" fill="#5cb848"/><circle cx="18" cy="10" r="2.800" fill="#f4b223"/><circle cx="14" cy="19" r="2" fill="#344"/><path d="m26 6-7 24-3 2 1-4 7-23z" fill="#e48c2b"/><path d="m23 7 2-6 5 2-3 6z" fill="#c99a6b"/></svg></button>
      <button class="it" aria-label="Excel">${office("X", "#107c41")}</button>
      <button class="it" aria-label="OneNote">${office("N", "#7719aa")}</button>
      <button class="it" aria-label="Outlook">${office("O", "#0a6cc4")}</button>
      <button class="it" aria-label="PowerPoint">${office("P", "#c43e1c")}</button>
      <button class="it" aria-label="Word">${office("W", "#185abd")}</button>
      <button class="it cur" aria-label="OutWit Hub">${wit("w3", "worb")}</button>
      <div class="tray">
        <span class="lang">TR</span>
        <svg class="up" viewBox="0 0 9 5"><path d="M0 5h9L4.500 0z" fill="#eee"/></svg>
        <svg class="sig" viewBox="0 0 15 12"><path d="M0 10h2v2H0zM3 8h2v4H3zM6 6h2v6H6zM9 3h2v9H9zM12 0h2v12h-2z" fill="#fff"/></svg>
        <svg class="bat" viewBox="0 0 14 16"><path d="M1.500 2.500h7v12h-7zM3.500 1h3" fill="none" stroke="#fff" stroke-width="1.500"/><path d="M3 5h3v8H3z" fill="#fff"/><path d="M6 5h8v4q0 2-3 2.500V15H9v-3.500Q6 11 6 9zM7.500 2h1.500v3H7.500zM11 2h1.500v3H11z" fill="#fff"/></svg>
        <div class="clock">16:38<br />20.10.2023</div>
        <button class="desk" aria-label="Show desktop"></button>
      </div>
    </footer>`;
  }

  render() {
    return html`
      ${this.titleBar()}
      <nav class="menu">${["File", "Edit", "View", "Navigation", "Tools", "Help", "Upgrade"].map((m) => html`<button>${m}</button>`)}</nav>
      ${this.toolbar()}
      <main class="main">
        ${this.tree()}
        <div class="work">
          <div class="top">
            ${this.site()}
            <aside class="log">
              <div class="lines">${LOG.map((l) => html`<div>${l}</div>`)}</div>
              <scroll-bar class="vlog"></scroll-bar>
              <scroll-bar class="hlog" horizontal></scroll-bar>
            </aside>
          </div>
          <div class="ips"><div><span>Local IP:</span><span>194.80.232.23</span></div><i></i><div><span>Remote IP:</span><span>172.67.149.202</span></div></div>
          ${this.results()}
          ${this.filter()}
        </div>
      </main>
      <div class="split"></div>
      ${this.lower()}
      <div class="status">${["I", "V", "P", "J"].map((t) => html`<button>${t}</button>`)}<button class="s">S</button></div>
      ${this.taskbar()}
      <button class="export">EXPORT</button>`;
  }
}
